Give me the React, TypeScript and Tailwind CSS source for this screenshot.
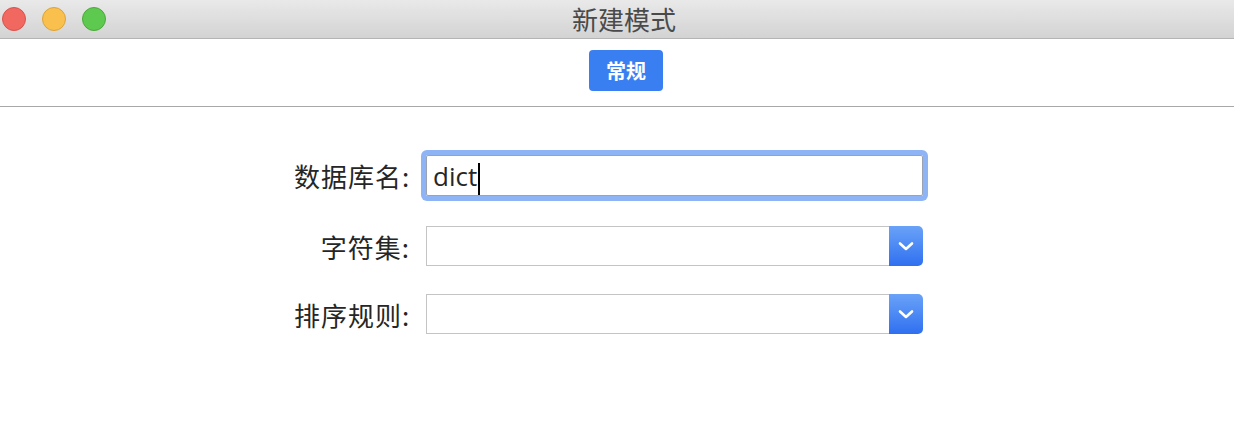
import React, { useState } from 'react';

const cjk = { fontFamily: '"Noto Sans CJK SC", "Noto Sans", sans-serif' };

const Chevron = () => (
  <svg width="16" height="10" viewBox="0 0 16 10" fill="none">
    <path d="M2 2.5l6 5.5 6-5.5" stroke="white" strokeWidth="2.6" strokeLinecap="round" strokeLinejoin="round" />
  </svg>
);

const SelectBox = () => (
  <div className="flex h-[40px] w-[497px]">
    <div className="flex-1 border border-r-0 border-[#c4c4c4] bg-white" />
    <div className="flex w-[34px] items-center justify-center rounded-r-[5px] bg-gradient-to-b from-[#6aa2f8] to-[#2f6ff0]">
      <Chevron />
    </div>
  </div>
);

const App = () => {
  const [name, setName] = useState('dict');

  return (
    <div className="h-[434px] w-[1234px] bg-white text-[#262626]" style={cjk}>
      {/* Title bar */}
      <div className="relative flex h-[39px] items-center justify-center border-b border-[#b4b4b4] bg-gradient-to-b from-[#e9e9e9] to-[#d3d3d3] pl-[14px]">
        <div className="absolute left-[2px] top-[7px] flex gap-[16px]">
          <span className="h-[24px] w-[24px] rounded-full border border-[#d9524c] bg-[#f0685f]" />
          <span className="h-[24px] w-[24px] rounded-full border border-[#dca33a] bg-[#f9c04e]" />
          <span className="h-[24px] w-[24px] rounded-full border border-[#4ca83c] bg-[#5ec94f]" />
        </div>
        <span className="text-[26px] leading-none text-[#4a4a4a]">新建模式</span>
      </div>

      {/* Toolbar */}
      <div className="flex h-[68px] justify-center border-b border-[#a8a8a8] pl-[18px] pt-[11px]">
        <button className="h-[41px] w-[74px] rounded-[4px] bg-[#3a7ff2] text-[20px] font-bold text-white">
          常规
        </button>
      </div>

      {/* Form */}
      <div className="grid grid-cols-[116px_497px] items-center gap-x-[16px] pl-[294px] pt-[48px]">
        <label className="text-right text-[26px] tracking-[1px] whitespace-nowrap">数据库名:</label>
        <div className="relative h-[41px] rounded-[2px] border border-[#9aa3b5] shadow-[0_0_0_5px_#8fb4f5]">
          <input
            value={name}
            onChange={(e) => setName(e.target.value)}
            className="h-full w-full bg-transparent pl-[6px] text-[26px] outline-none"
            style={{ fontFamily: '"Open Sans", "Noto Sans", sans-serif' }}
          />
          <span className="absolute left-[51px] top-[7px] h-[32px] w-[2px] bg-black" />
        </div>

        <label className="mt-[30px] text-right text-[26px] tracking-[1px] whitespace-nowrap">字符集:</label>
        <div className="mt-[30px]">
          <SelectBox />
        </div>

        <label className="mt-[28px] text-right text-[26px] tracking-[1px] whitespace-nowrap">排序规则:</label>
        <div className="mt-[28px]">
          <SelectBox />
        </div>
      </div>
    </div>
  );
};

export default App;
